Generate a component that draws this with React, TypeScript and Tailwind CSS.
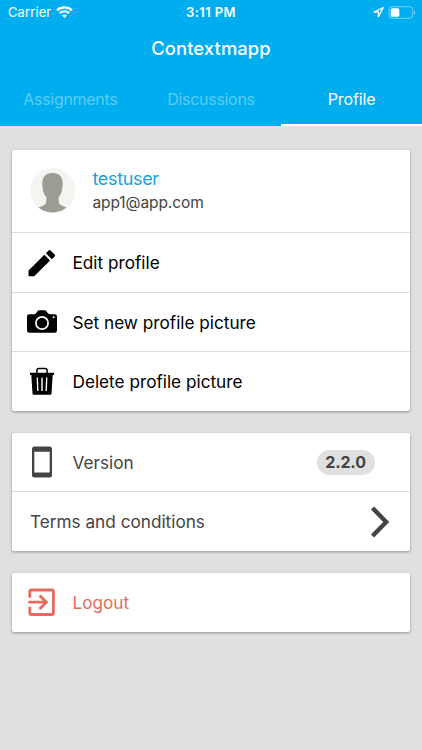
import type { ReactNode } from 'react'
import clsx from 'clsx'

const tabs = ['Assignments', 'Discussions', 'Profile']

function StatusBar() {
  return (
    <div className="grid h-6 grid-cols-3 items-center text-white">
      <div className="flex items-center gap-[5px] pl-2">
        <span className="text-[13px] leading-6 tracking-[0.1px]">Carrier</span>
        <svg className="h-3 w-[17px]" viewBox="0 0 17 12" fill="none" stroke="currentColor">
          <path d="M1 4.3C5.2 .4 11.8 .4 16 4.3" strokeWidth="2.3" />
          <path d="M3.8 7.1c2.7-2.4 6.7-2.4 9.4 0" strokeWidth="2.2" />
          <path d="M8.5 11.9 6.1 9.5c1.3-1.2 3.5-1.2 4.8 0z" fill="currentColor" stroke="none" />
        </svg>
      </div>
      <div className="text-center text-[13px] leading-6 font-semibold tracking-[0.4px]">3:11 PM</div>
      <div className="flex items-center justify-end gap-1 pr-[6px]">
        <svg className="h-3 w-3" viewBox="0 0 12 12" fill="none" stroke="currentColor" strokeWidth="1.3" strokeLinejoin="round">
          <path d="M11.2 1.5 2 6h4.4v4.6z" />
        </svg>
        <svg className="h-[13px] w-7" viewBox="0 0 28 13" fill="none">
          <rect x="1" y=".7" width="23.7" height="11.6" rx="3" stroke="white" strokeOpacity=".45" />
          <rect x="2.7" y="2.3" width="8.6" height="8.4" rx="1.5" fill="white" />
          <path d="M26 4.4c1.5.5 1.5 3.7 0 4.2z" fill="white" fillOpacity=".5" />
        </svg>
      </div>
    </div>
  )
}

function Card({ children }: { children: ReactNode }) {
  return (
    <section className="divide-y divide-[#dcdcdc] rounded-[2px] bg-white shadow-[0_1px_3px_rgba(0,0,0,0.35)]">
      {children}
    </section>
  )
}

function Row({ icon, label, className }: { icon: ReactNode; label: ReactNode; className?: string }) {
  return (
    <div className={clsx('flex items-center pl-[14px] text-[17.2px]', className)}>
      <span className="mr-[14.5px] flex size-8 shrink-0 items-center justify-center">{icon}</span>
      <div className="flex grow items-center pt-px">{label}</div>
    </div>
  )
}

function Avatar() {
  return (
    <svg className="size-[45px]" viewBox="0 0 45 45">
      <circle cx="22.5" cy="22.5" r="22.5" fill="#f4f5f1" />
      <path
        d="M22.5 5C15.8 5 12.3 9 12.3 15.7c0 5.9 1.5 10.9 4.2 13.7 0 5.2-.8 7.1-3.7 8.3-1.7.7-3.1 1.1-4.3 1.9a22.5 22.5 0 0 0 28 0c-1.2-.8-2.6-1.2-4.3-1.9-2.9-1.2-3.7-3.1-3.7-8.3 2.7-2.8 4.2-7.8 4.2-13.7C32.7 9 29.2 5 22.5 5z"
        fill="#9b9d92"
      />
    </svg>
  )
}

function PencilIcon() {
  return (
    <svg className="size-8" viewBox="0 0 32 32" fill="currentColor">
      <path d="M2.5 23.6v4.6q0 1.1 1.1 1.1h4.6L24.1 13.4 18.4 7.7zM19.8 6.2l2.8-2.8q1-1 2 0l4 4q1 1 0 2l-2.8 2.8z" />
    </svg>
  )
}

function CameraIcon() {
  return (
    <svg className="size-8" viewBox="0 0 32 32">
      <path d="M3.4 8.2h5.1c1.5 0 3.1-3.9 4.7-3.9h5.6c1.6 0 3.2 3.9 4.7 3.9h5.1Q31 8.2 31 10.5v14q0 2.3-2.4 2.3H3.4Q1 26.8 1 24.5v-14Q1 8.2 3.4 8.2z" />
      <circle cx="16" cy="17" r="6.1" fill="none" stroke="white" strokeWidth="1.7" />
      <circle cx="27.6" cy="11.2" r="1" fill="white" />
    </svg>
  )
}

function TrashIcon() {
  return (
    <svg className="size-8" viewBox="0 0 32 32" fill="none">
      <path d="M10.9 7V4.4q0-2 2-2h6.2q2 0 2 2V7" stroke="black" strokeWidth="1.5" />
      <path d="M4 6.8h24v2.1h-1.3l-1.2 18.6q-.1 1.3-1.3 1.3H7.8q-1.2 0-1.3-1.3L5.3 8.9H4z" fill="black" />
      <path d="m11.3 11.5.5 13.5M16 11.5V25M20.7 11.5 20.2 25" stroke="white" strokeWidth="1.4" />
    </svg>
  )
}

function PhoneIcon() {
  return (
    <svg className="size-8" viewBox="0 0 32 32" fill="currentColor">
      <path fillRule="evenodd" d="M8.5.5h15Q26 .5 26 3v26q0 2.5-2.5 2.5h-15Q6 31.5 6 29V3Q6 .5 8.5.5zM8.3 5.7v20.7h15.4V5.7z" />
    </svg>
  )
}

function LogoutIcon() {
  return (
    <svg className="size-8" viewBox="0 0 32 32" fill="none" stroke="currentColor" strokeWidth="2.8">
      <path d="M3.8 11.7V5.5q0-1.5 1.5-1.5h20.6q1.5 0 1.5 1.5v21.5q0 1.5-1.5 1.5H5.3q-1.5 0-1.5-1.5v-6.2" />
      <path d="M2.3 16.2h17.9M13.6 9.4l6.8 6.8-6.8 6.8" />
    </svg>
  )
}

export default function App() {
  return (
    <div className="min-h-[750px] w-[422px] bg-[#e0e0e0] font-['Inter',sans-serif]">
      <header className="h-[126px] bg-[#00aeef]">
        <StatusBar />
        <h1 className="h-12 text-center text-[18.4px] leading-[48px] font-medium tracking-[0.1px] text-white">
          Contextmapp
        </h1>
        <nav className="grid h-[54px] grid-cols-3 text-center text-[16px] leading-[54px] tracking-[-0.3px]">
          {tabs.map((tab) => (
            <div
              key={tab}
              className={clsx(
                'h-[54px] border-b-2',
                tab === 'Profile' ? 'border-white tracking-[-0.1px] text-white' : 'border-transparent text-[#5bcbf5]'
              )}
            >
              {tab}
            </div>
          ))}
        </nav>
      </header>

      <main className="flex flex-col gap-[22px] px-3 pt-6">
        <Card>
          <div className="flex h-[83px] items-center gap-[18px] pb-px pl-[17.5px]">
            <Avatar />
            <div className="pt-px">
              <div className="text-[18px] leading-6 tracking-[-0.35px] text-[#1a9fdb]">testuser</div>
              <div className="text-[15.5px] leading-6 tracking-[-0.1px] text-[#444]">app1@app.com</div>
            </div>
          </div>
          <Row className="h-[60px]" icon={<PencilIcon />} label="Edit profile" />
          <Row className="h-[59px]" icon={<CameraIcon />} label="Set new profile picture" />
          <Row className="h-[59px]" icon={<TrashIcon />} label="Delete profile picture" />
        </Card>

        <Card>
          <Row
            className="h-[59px] text-[#444]"
            icon={<PhoneIcon />}
            label={
              <>
                <span>Version</span>
                <span className="mr-[35.5px] ml-auto flex h-[25px] w-[58px] items-center justify-center rounded-full bg-[#e0e0e0] text-[16px] font-bold tracking-[-0.1px]">
                  2.2.0
                </span>
              </>
            }
          />
          <div className="flex h-[59px] items-center justify-between pr-5 pl-[18px] text-[17.2px] text-[#444]">
            <span className="pt-px">Terms and conditions</span>
            <svg className="h-8 w-5" viewBox="0 0 20 32" fill="none" stroke="currentColor" strokeWidth="4.4">
              <path d="M2.5 2 16.2 16 2.5 30" />
            </svg>
          </div>
        </Card>

        <Card>
          <Row className="h-[58.5px] text-[#e36c60]" icon={<LogoutIcon />} label="Logout" />
        </Card>
      </main>
    </div>
  )
}
